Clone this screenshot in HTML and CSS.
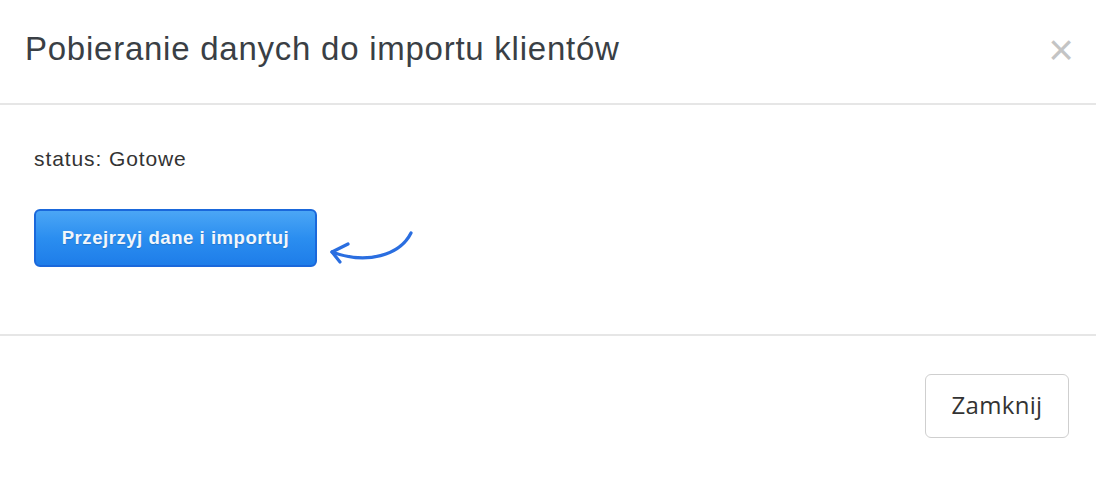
FILE: index.html
```html
<!DOCTYPE html>
<html lang="pl">
<head>
<meta charset="utf-8">
<title>Pobieranie danych</title>
<link rel="stylesheet" href="styles.css">
</head>
<body>
<div class="modal">
  <div class="modal-header">
    <h4 class="modal-title">Pobieranie danych do importu klientów</h4>
    <button class="close" aria-label="Zamknij">&times;</button>
  </div>
  <div class="modal-body">
    <p class="status">status: Gotowe</p>
    <div class="action-row">
      <button class="btn-primary">Przejrzyj dane i importuj</button>
      <svg class="arrow" width="95" height="40" viewBox="0 0 95 40">
        <path d="M89 3 C78 25 45 35 10 22" fill="none" stroke="#2a6ee0" stroke-width="3.2" stroke-linecap="round"/>
        <path d="M26 14 L10 22 L18 32" fill="none" stroke="#2a6ee0" stroke-width="3.2" stroke-linecap="round" stroke-linejoin="round"/>
      </svg>
    </div>
  </div>
  <div class="modal-footer">
    <button class="btn-default">Zamknij</button>
  </div>
</div>
</body>
</html>
```
FILE: styles.css
```css
* { box-sizing: border-box; }
html, body { margin: 0; padding: 0; background: #fff; }
body { width: 1096px; height: 478px; overflow: hidden; font-family: "Liberation Sans", Arial, sans-serif; color: #333; }
.modal { display: flex; flex-direction: column; }
.modal-header {
  height: 105px;
  border-bottom: 2px solid #e6e6e6;
  display: flex;
  align-items: center;
  justify-content: space-between;
  padding: 0 22px 6px 25px;
}
.modal-title {
  margin: 0;
  font-weight: normal;
  font-size: 33px;
  letter-spacing: 0.75px;
  color: #3a3f45;
}
.close {
  border: 0;
  background: none;
  padding: 0;
  font-family: "Liberation Sans", Arial, sans-serif;
  font-size: 44px;
  line-height: 1;
  color: #c4c4c4;
  margin-top: 2px;
}
.modal-body {
  height: 231px;
  border-bottom: 2px solid #e6e6e6;
  padding: 42px 34px 0 34px;
}
.status {
  margin: 0;
  font-size: 21px;
  letter-spacing: 0.9px;
  color: #333;
}
.action-row {
  display: flex;
  align-items: flex-start;
  margin-top: 38px;
}
.btn-primary {
  width: 283px;
  height: 58px;
  border: 2px solid #1a68db;
  border-radius: 6px;
  background: linear-gradient(to bottom, #4ba6f5 0%, #2b8ef0 50%, #1e7de9 100%);
  color: #f2f6fb;
  font-family: "Liberation Sans", Arial, sans-serif;
  font-weight: bold;
  font-size: 18.5px;
  letter-spacing: 0.55px;
  padding: 0;
  text-shadow: 0 1px 1px rgba(0,0,0,0.15);
}
.arrow { margin-left: 5px; margin-top: 21px; }
.modal-footer {
  display: flex;
  justify-content: flex-end;
  padding: 38px 27px 0 0;
}
.btn-default {
  width: 144px;
  height: 64px;
  border: 1px solid #cfcfcf;
  border-radius: 6px;
  background: #fff;
  color: #333;
  font-family: "Open Sans", "DejaVu Sans", sans-serif;
  font-size: 24px;
  letter-spacing: 0.3px;
  padding: 0 0 3px 0;
}
```
